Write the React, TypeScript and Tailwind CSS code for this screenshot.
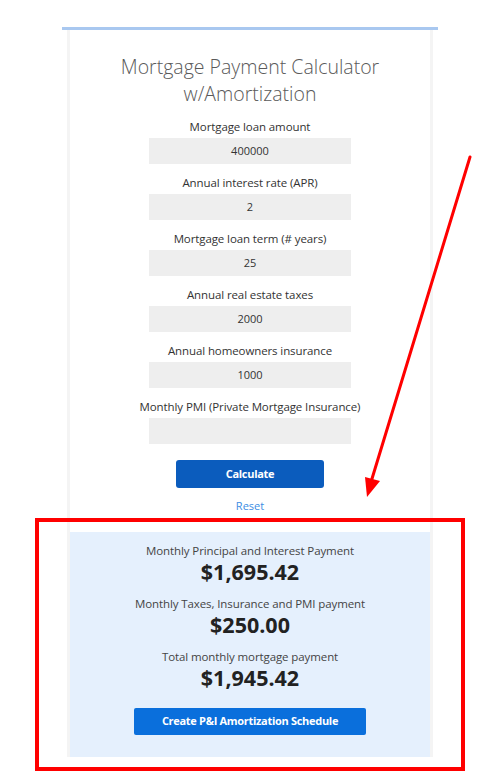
const fields = [
  { label: "Mortgage loan amount", value: "400000" },
  { label: "Annual interest rate (APR)", value: "2" },
  { label: "Mortgage loan term (# years)", value: "25" },
  { label: "Annual real estate taxes", value: "2000" },
  { label: "Annual homeowners insurance", value: "1000" },
  { label: "Monthly PMI (Private Mortgage Insurance)", value: "" },
];

const results = [
  { label: "Monthly Principal and Interest Payment", amount: "$1,695.42" },
  { label: "Monthly Taxes, Insurance and PMI payment", amount: "$250.00" },
  { label: "Total monthly mortgage payment", amount: "$1,945.42" },
];

export default function App() {
  return (
    <div className="relative w-[503px] h-[782px] bg-white font-['Open_Sans',sans-serif] overflow-hidden">
      <div className="pt-[27px] pl-[62px]">
        <div className="w-[376px] border-t-[3px] border-[#a9c8f0]">
          <div className="mx-[5px] border-x-[3px] border-[#f4f4f4] flex flex-col">
            <div className="flex flex-col items-center pt-[23px]">
              <h1 className="text-[19.5px] leading-[27px] font-light text-[#5a5a5a] text-center">
                Mortgage Payment Calculator
                <br />
                w/Amortization
              </h1>

              <div className="flex flex-col items-center mt-[12px]">
                {fields.map((f, i) => (
                  <div key={f.label} className={`flex flex-col items-center ${i > 0 ? "mt-[11px]" : ""}`}>
                    <p className="text-[11.5px] leading-[16px] text-[#333] tracking-[-0.1px]">{f.label}</p>
                    <div className="mt-[3px] w-[202px] h-[26px] bg-[#eeeeee] flex items-center justify-center text-[11px] text-[#333]">
                      {f.value}
                    </div>
                  </div>
                ))}
              </div>

              <button className="mt-[16px] w-[148px] h-[28px] rounded-[3px] bg-[#0b5cbd] text-white text-[11px] font-bold tracking-[-0.3px]">
                Calculate
              </button>
              <p className="mt-[10px] text-[11px] leading-[16px] text-[#3d8de3]">Reset</p>
            </div>

            <div className="mt-[18px] bg-[#e5f0fd] flex flex-col items-center pt-[11px] pb-[22px]">
              {results.map((r, i) => (
                <div key={r.label} className={`flex flex-col items-center ${i > 0 ? "mt-[11px]" : ""}`}>
                  <p className="text-[11.5px] leading-[16px] text-[#444] tracking-[-0.1px]">{r.label}</p>
                  <p className="text-[21.5px] leading-[26px] font-bold text-[#222]">{r.amount}</p>
                </div>
              ))}
              <button className="mt-[17px] w-[232px] h-[27px] rounded-[2px] bg-[#0a6fdc] text-white text-[11px] font-bold tracking-[-0.3px]">
                Create P&amp;I Amortization Schedule
              </button>
            </div>
          </div>
        </div>
      </div>

      <div className="absolute left-[35px] top-[518px] w-[430px] h-[253px] border-4 border-[#ff0000]" />

      <svg className="absolute left-0 top-0" width="503" height="782" viewBox="0 0 503 782">
        <line x1="470" y1="157" x2="371" y2="482" stroke="#ff0000" strokeWidth="3" strokeLinecap="round" />
        <polygon points="365,477 380,481 367,497" fill="#ff0000" />
      </svg>
    </div>
  );
}
